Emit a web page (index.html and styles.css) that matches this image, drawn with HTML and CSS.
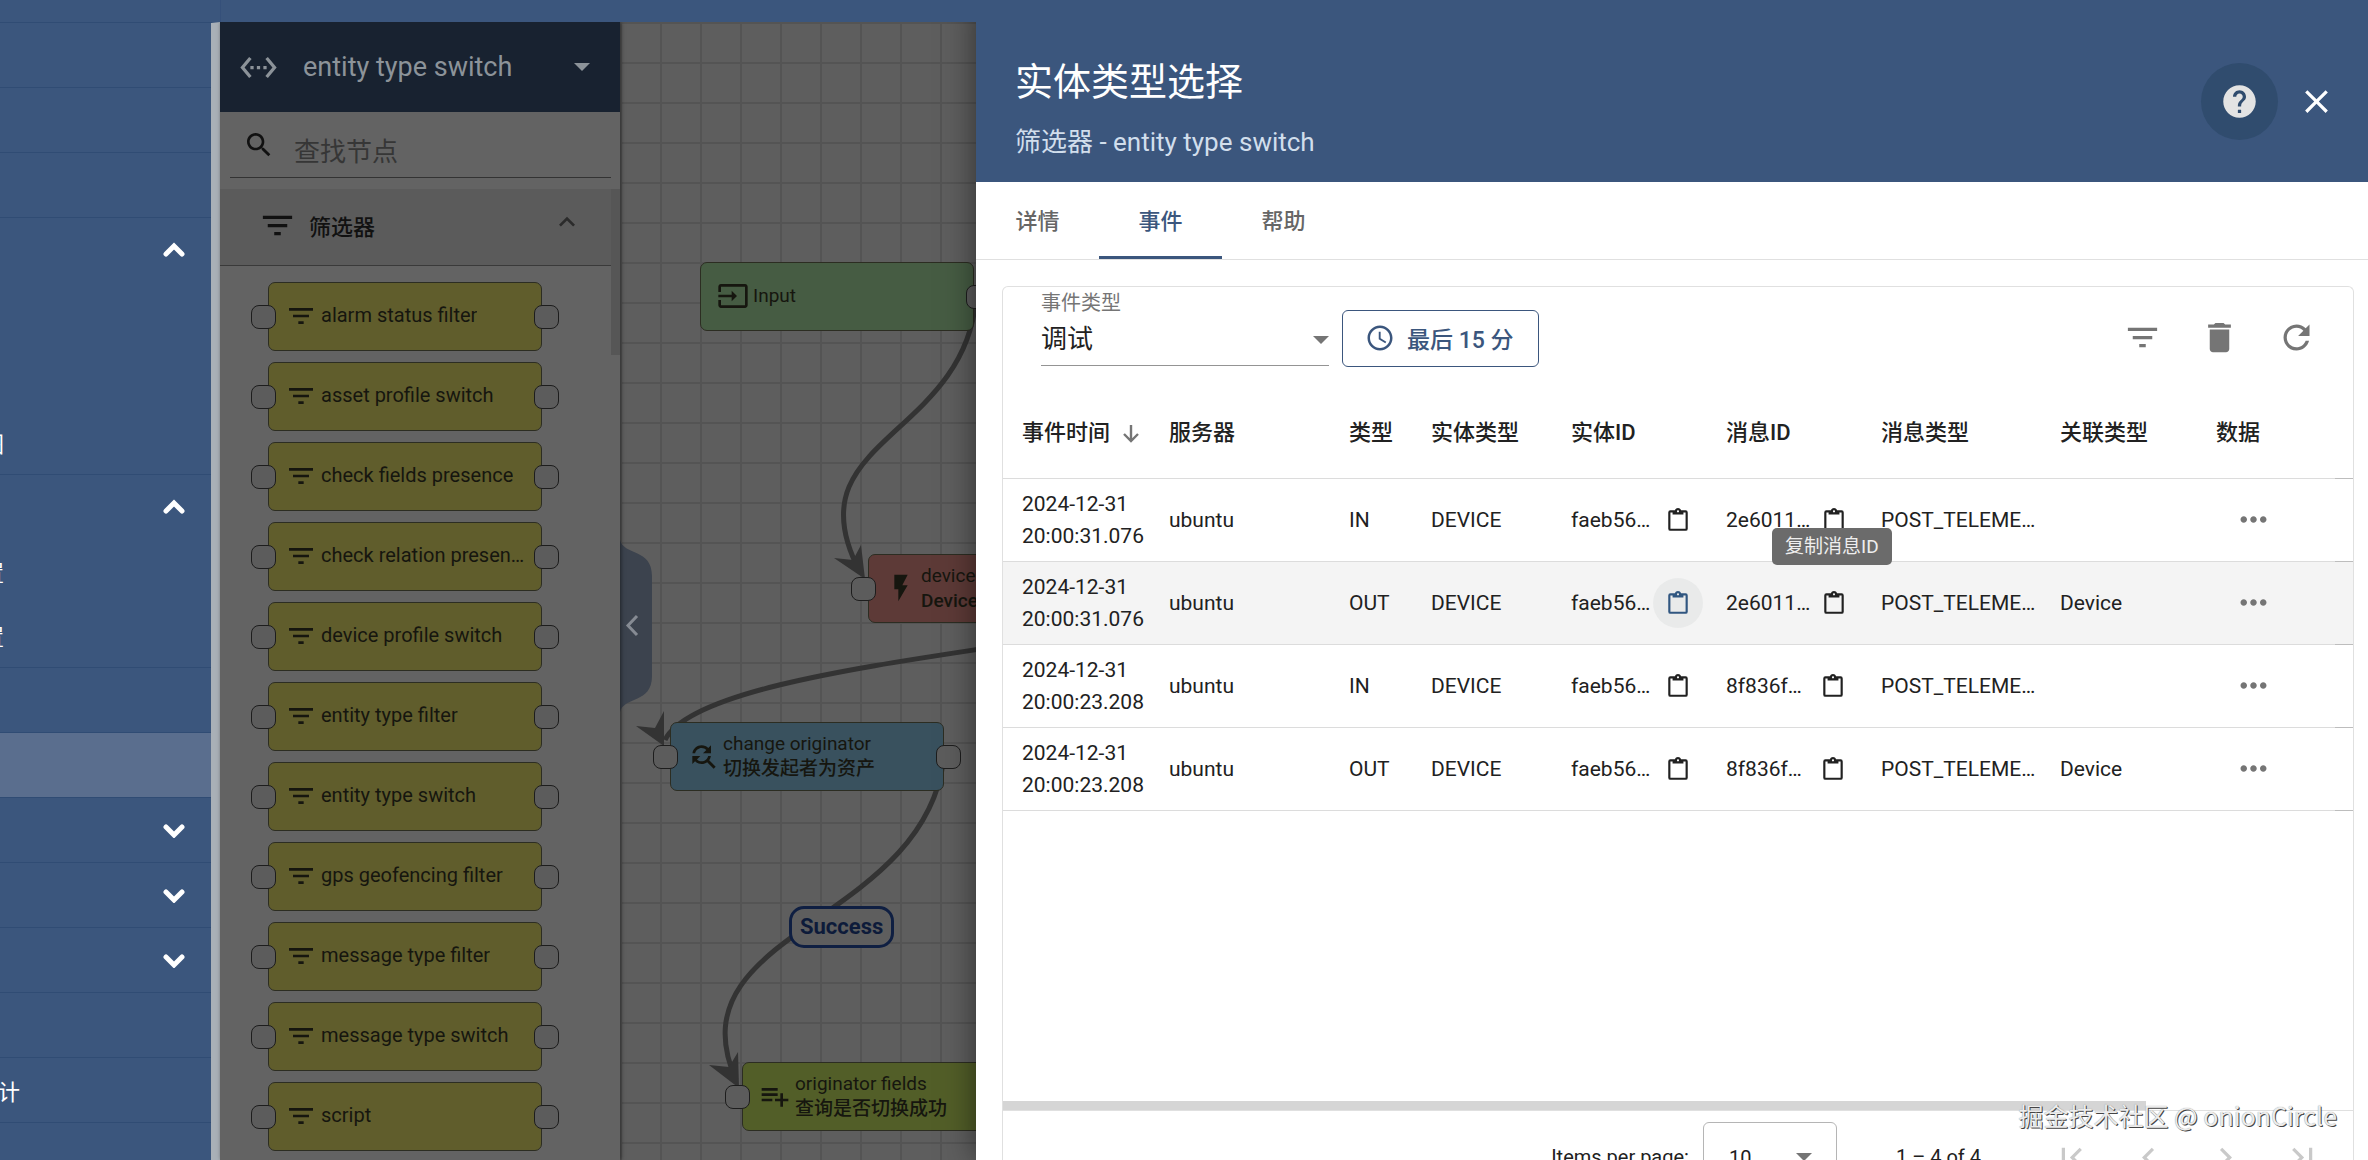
FILE: index.html
```html
<!DOCTYPE html>
<html lang="zh-CN">
<head>
<meta charset="utf-8">
<title>规则链 - entity type switch</title>
<link rel="stylesheet" href="styles.css">
</head>
<body>
<svg class="sprite" aria-hidden="true">
  <symbol id="i-filter" viewBox="0 0 24 24"><path d="M10 18h4v-2h-4v2zM3 6v2h18V6H3zm3 7h12v-2H6v2z"/></symbol>
  <symbol id="i-trash" viewBox="0 0 24 24"><path d="M6 19c0 1.1.9 2 2 2h8c1.1 0 2-.9 2-2V7H6v12zM19 4h-3.5l-1-1h-5l-1 1H5v2h14V4z"/></symbol>
  <symbol id="i-refresh" viewBox="0 0 24 24"><path d="M17.65 6.35C16.2 4.9 14.21 4 12 4c-4.42 0-7.99 3.58-7.99 8s3.57 8 7.99 8c3.73 0 6.84-2.55 7.73-6h-2.08c-.82 2.33-3.04 4-5.65 4-3.31 0-6-2.69-6-6s2.69-6 6-6c1.66 0 3.14.69 4.22 1.78L13 11h7V4l-2.35 2.35z"/></symbol>
  <symbol id="i-help" viewBox="0 0 24 24"><path d="M12 2C6.48 2 2 6.48 2 12s4.48 10 10 10 10-4.48 10-10S17.52 2 12 2zm1 17h-2v-2h2v2zm2.07-7.75l-.9.92C13.45 12.9 13 13.5 13 15h-2v-.5c0-1.1.45-2.1 1.17-2.83l1.24-1.26c.37-.36.59-.86.59-1.41 0-1.1-.9-2-2-2s-2 .9-2 2H8c0-2.21 1.79-4 4-4s4 1.79 4 4c0 .88-.36 1.68-.93 2.25z"/></symbol>
  <symbol id="i-close" viewBox="0 0 24 24"><path d="M19 6.41L17.59 5 12 10.59 6.41 5 5 6.41 10.59 12 5 17.59 6.41 19 12 13.41 17.59 19 19 17.59 13.41 12z"/></symbol>
  <symbol id="i-more" viewBox="0 0 24 24"><path d="M6 10c-1.1 0-2 .9-2 2s.9 2 2 2 2-.9 2-2-.9-2-2-2zm12 0c-1.1 0-2 .9-2 2s.9 2 2 2 2-.9 2-2-.9-2-2-2zm-6 0c-1.1 0-2 .9-2 2s.9 2 2 2 2-.9 2-2-.9-2-2-2z"/></symbol>
  <symbol id="i-clock" viewBox="0 0 24 24"><path d="M11.99 2C6.47 2 2 6.48 2 12s4.47 10 9.99 10C17.52 22 22 17.52 22 12S17.52 2 11.99 2zM12 20c-4.42 0-8-3.58-8-8s3.58-8 8-8 8 3.58 8 8-3.58 8-8 8zm.5-13H11v6l5.25 3.15.75-1.23-4.5-2.67z"/></symbol>
  <symbol id="i-code" viewBox="0 0 24 24"><path d="M7.77 6.76L6.23 5.48.82 12l5.41 6.52 1.54-1.28L3.42 12l4.35-5.24zM7 13h2v-2H7v2zm10-2h-2v2h2v-2zm-6 2h2v-2h-2v2zm6.77-7.52l-1.54 1.28L20.58 12l-4.35 5.24 1.54 1.28L23.18 12l-5.41-6.52z"/></symbol>
  <symbol id="i-search" viewBox="0 0 24 24"><path d="M15.5 14h-.79l-.28-.27C15.41 12.59 16 11.11 16 9.5 16 5.91 13.09 3 9.5 3S3 5.91 3 9.5 5.91 16 9.5 16c1.61 0 3.09-.59 4.23-1.57l.27.28v.79l5 4.99L20.49 19l-4.99-5zm-6 0C7.01 14 5 11.99 5 9.5S7.01 5 9.5 5 14 7.01 14 9.5 11.99 14 9.5 14z"/></symbol>
  <symbol id="i-input" viewBox="0 0 24 24"><path d="M21 3.01H3c-1.1 0-2 .9-2 2V9h2V4.99h18v14.03H3V15H1v4.01c0 1.1.9 1.98 2 1.98h18c1.1 0 2-.88 2-1.98v-14c0-1.11-.9-2-2-2zM11 16l4-4-4-4v3H1v2h10v3z"/></symbol>
  <symbol id="i-bolt" viewBox="0 0 24 24"><path d="M7 2v11h3v9l7-12h-4l4-8z"/></symbol>
  <symbol id="i-replace" viewBox="0 0 24 24"><path d="M11 6c1.38 0 2.63.56 3.54 1.46L12 10h6V4l-2.05 2.05C14.68 4.78 12.93 4 11 4c-3.53 0-6.43 2.61-6.92 6H6.1c.46-2.28 2.48-4 4.9-4zm5.64 9.14c.66-.9 1.12-1.97 1.28-3.14H15.9c-.46 2.28-2.48 4-4.9 4-1.38 0-2.63-.56-3.54-1.46L10 12H4v6l2.05-2.05C7.32 17.22 9.07 18 11 18c1.55 0 2.98-.51 4.14-1.36L20 21.49 21.49 20l-4.85-4.86z"/></symbol>
  <symbol id="i-playlist" viewBox="0 0 24 24"><path d="M14 10H2v2h12v-2zm0-4H2v2h12V6zm4 8v-4h-2v4h-4v2h4v4h2v-4h4v-2h-4zM2 16h8v-2H2v2z"/></symbol>
  <symbol id="i-clipboard" viewBox="0 0 24 24"><path d="M19,3H14.82C14.4,1.84 13.3,1 12,1C10.7,1 9.6,1.84 9.18,3H5A2,2 0 0,0 3,5V20A2,2 0 0,0 5,22H19A2,2 0 0,0 21,20V5A2,2 0 0,0 19,3M12,3A1,1 0 0,1 13,4A1,1 0 0,1 12,5A1,1 0 0,1 11,4A1,1 0 0,1 12,3M7,7H17V5H19V20H5V5H7V7Z"/></symbol>
  <symbol id="i-up" viewBox="0 0 24 24"><path d="M7.41 15.41L12 10.83l4.59 4.58L18 14l-6-6-6 6z"/></symbol>
  <symbol id="i-menu-up" viewBox="0 0 24 16"><path d="M4 12l8-8 8 8" fill="none" stroke="currentColor" stroke-width="5" stroke-linecap="round"/></symbol>
  <symbol id="i-menu-down" viewBox="0 0 24 16"><path d="M4 5l8 8 8-8" fill="none" stroke="currentColor" stroke-width="5" stroke-linecap="round"/></symbol>
  <symbol id="i-caret" viewBox="0 0 16 8"><path d="M0 0h16L8 8z"/></symbol>
  <symbol id="i-sort" viewBox="0 0 16 18"><path d="M8 0v16M1 9l7 7 7-7" fill="none" stroke="currentColor" stroke-width="2.4"/></symbol>
  <symbol id="i-first" viewBox="0 0 24 24"><path d="M18.41 16.59L13.82 12l4.59-4.59L17 6l-6 6 6 6zM6 6h2v12H6z"/></symbol>
  <symbol id="i-prev" viewBox="0 0 24 24"><path d="M15.41 7.41L14 6l-6 6 6 6 1.41-1.41L10.83 12z"/></symbol>
  <symbol id="i-next" viewBox="0 0 24 24"><path d="M10 6L8.59 7.41 13.17 12l-4.58 4.59L10 18l6-6z"/></symbol>
  <symbol id="i-last" viewBox="0 0 24 24"><path d="M5.59 7.41L10.18 12l-4.59 4.59L7 18l6-6-6-6zM16 6h2v12h-2z"/></symbol>
</svg>

<div class="app">
  <header class="topbar"><div class="topbar-brand"></div></header>
  <div class="workspace">
    <nav class="sidebar">
      <ul class="menu">
        <li class="menu-group"><a class="menu-item" href="#" aria-label="首页"></a></li>
        <li class="menu-group"><a class="menu-item" href="#" aria-label="告警"></a></li>
        <li class="menu-group"><a class="menu-item" href="#" aria-label="仪表板"></a></li>
        <li class="menu-group">
          <a class="menu-item" href="#" aria-label="实体"><svg class="menu-chevron"><use href="#i-menu-up"/></svg></a>
          <a class="menu-sub" href="#" aria-label="设备"></a>
          <a class="menu-sub" href="#" aria-label="资产"></a>
          <a class="menu-sub" href="#"><span class="menu-label">图</span></a>
        </li>
        <li class="menu-group">
          <a class="menu-item" href="#" aria-label="配置"><svg class="menu-chevron"><use href="#i-menu-up"/></svg></a>
          <a class="menu-sub" href="#"><span class="menu-label">置</span></a>
          <a class="menu-sub" href="#"><span class="menu-label">置</span></a>
        </li>
        <li class="menu-group"><a class="menu-item" href="#" aria-label="客户"></a></li>
        <li class="menu-group"><a class="menu-item menu-item-active" href="#" aria-label="规则链库"></a></li>
        <li class="menu-group"><a class="menu-item" href="#" aria-label="边缘管理"><svg class="menu-chevron"><use href="#i-menu-down"/></svg></a></li>
        <li class="menu-group"><a class="menu-item" href="#" aria-label="高级功能"><svg class="menu-chevron"><use href="#i-menu-down"/></svg></a></li>
        <li class="menu-group"><a class="menu-item" href="#" aria-label="资源"><svg class="menu-chevron"><use href="#i-menu-down"/></svg></a></li>
        <li class="menu-group"><a class="menu-item" href="#" aria-label="通知中心"></a></li>
        <li class="menu-group"><a class="menu-item" href="#"><span class="menu-label menu-label-wide">计</span></a></li>
        <li class="menu-group"><a class="menu-item" href="#" aria-label="设置"></a></li>
      </ul>
    </nav>

    <aside class="library">
      <button class="library-head" type="button">
        <svg class="icon-lg"><use href="#i-code"/></svg>
        <span class="library-title">entity type switch</span>
        <svg class="caret"><use href="#i-caret"/></svg>
      </button>
      <label class="search">
        <svg class="icon-md"><use href="#i-search"/></svg>
        <input class="search-input" type="text" placeholder="查找节点" aria-label="查找节点">
      </label>
      <div class="library-body">
        <button class="category" type="button">
          <svg class="icon-lg"><use href="#i-filter"/></svg>
          <span class="category-title">筛选器</span>
          <svg class="icon-md category-chevron"><use href="#i-up"/></svg>
        </button>
        <ul class="node-list">
          <li class="node node-filter"><svg class="icon-md"><use href="#i-filter"/></svg><span class="node-name">alarm status filter</span></li>
          <li class="node node-filter"><svg class="icon-md"><use href="#i-filter"/></svg><span class="node-name">asset profile switch</span></li>
          <li class="node node-filter"><svg class="icon-md"><use href="#i-filter"/></svg><span class="node-name">check fields presence</span></li>
          <li class="node node-filter"><svg class="icon-md"><use href="#i-filter"/></svg><span class="node-name">check relation presence</span></li>
          <li class="node node-filter"><svg class="icon-md"><use href="#i-filter"/></svg><span class="node-name">device profile switch</span></li>
          <li class="node node-filter"><svg class="icon-md"><use href="#i-filter"/></svg><span class="node-name">entity type filter</span></li>
          <li class="node node-filter"><svg class="icon-md"><use href="#i-filter"/></svg><span class="node-name">entity type switch</span></li>
          <li class="node node-filter"><svg class="icon-md"><use href="#i-filter"/></svg><span class="node-name">gps geofencing filter</span></li>
          <li class="node node-filter"><svg class="icon-md"><use href="#i-filter"/></svg><span class="node-name">message type filter</span></li>
          <li class="node node-filter"><svg class="icon-md"><use href="#i-filter"/></svg><span class="node-name">message type switch</span></li>
          <li class="node node-filter"><svg class="icon-md"><use href="#i-filter"/></svg><span class="node-name">script</span></li>
        </ul>
        <div class="library-thumb"></div>
      </div>
    </aside>

    <main class="canvas">
      <svg class="edges" viewBox="620 22 400 1138" width="400" height="1138" aria-hidden="true">
        <path class="edge-tab" d="M620 540C624 556 652 548 652 576V676C652 704 624 696 620 712Z"/>
        <path class="edge-chevron" d="M637 616l-9 9.500 9 9.500"/>
        <g class="edge">
          <path d="M976 300C962 440 790 440 860 572"/>
          <path d="M1000 646C870 666 690 690 665 740"/>
          <path d="M944 757C925 925 670 930 736 1080"/>
        </g>
        <g class="arrow">
          <path d="M865 579L834 558 853 560 861 545Z"/>
          <path d="M664 746L636 726 655 728 664 711Z"/>
          <path d="M739 1088L709 1065 729 1067 738 1052Z"/>
        </g>
      </svg>
      <div class="node node-input no-in canvas-node at-input"><svg class="icon-md"><use href="#i-input"/></svg><span class="node-name">Input</span></div>
      <div class="node node-action canvas-node at-device"><svg class="icon-md"><use href="#i-bolt"/></svg><span class="node-text"><span>device</span><b>Device</b></span></div>
      <div class="node node-transform canvas-node at-change"><svg class="icon-md"><use href="#i-replace"/></svg><span class="node-text"><span>change originator</span><b>切换发起者为资产</b></span></div>
      <div class="node node-enrich canvas-node at-fields"><svg class="icon-md"><use href="#i-playlist"/></svg><span class="node-text"><span>originator fields</span><b>查询是否切换成功</b></span></div>
      <div class="edge-label">Success</div>
    </main>
  </div>

  <section class="drawer">
    <header class="drawer-head">
      <div class="drawer-titles">
        <h1 class="drawer-title">实体类型选择</h1>
        <p class="drawer-subtitle">筛选器 - entity type switch</p>
      </div>
      <div class="drawer-actions">
        <button class="round-btn round-btn-help" type="button" aria-label="帮助"><svg class="icon-lg"><use href="#i-help"/></svg></button>
        <button class="round-btn" type="button" aria-label="关闭"><svg class="icon-lg"><use href="#i-close"/></svg></button>
      </div>
    </header>
    <div class="tabs" role="tablist">
      <button class="tab" role="tab" type="button">详情</button>
      <button class="tab tab-active" role="tab" type="button" aria-selected="true">事件</button>
      <button class="tab" role="tab" type="button">帮助</button>
    </div>
    <div class="card">
      <div class="toolbar">
        <div class="field">
          <label class="field-label" for="event-type">事件类型</label>
          <div class="select-wrap">
            <select class="field-select" id="event-type"><option>调试</option></select>
            <svg class="caret"><use href="#i-caret"/></svg>
          </div>
        </div>
        <button class="time-btn" type="button"><svg class="icon-sm"><use href="#i-clock"/></svg>最后 15 分</button>
        <div class="toolbar-actions">
          <button class="tool-btn" type="button" aria-label="筛选"><svg class="icon-lg"><use href="#i-filter"/></svg></button>
          <button class="tool-btn" type="button" aria-label="清除"><svg class="icon-lg"><use href="#i-trash"/></svg></button>
          <button class="tool-btn" type="button" aria-label="刷新"><svg class="icon-lg"><use href="#i-refresh"/></svg></button>
        </div>
      </div>
      <div class="table-area">
        <table class="events">
          <colgroup><col class="c-time"><col class="c-server"><col class="c-type"><col class="c-etype"><col class="c-id"><col class="c-id"><col class="c-mtype"><col class="c-rel"><col><col class="c-edge"></colgroup>
          <thead>
            <tr><th>事件时间<svg class="sort"><use href="#i-sort"/></svg></th><th>服务器</th><th>类型</th><th>实体类型</th><th>实体ID</th><th>消息ID</th><th>消息类型</th><th>关联类型</th><th>数据</th><th></th></tr>
          </thead>
          <tbody>
            <tr>
              <td>2024-12-31<br>20:00:31.076</td><td>ubuntu</td><td>IN</td><td>DEVICE</td>
              <td><div class="id-cell"><span>faeb56…</span><button class="copy-btn" type="button" aria-label="复制实体ID"><svg class="icon-xs"><use href="#i-clipboard"/></svg></button></div></td>
              <td><div class="id-cell"><span>2e6011…</span><button class="copy-btn" type="button" aria-label="复制消息ID"><svg class="icon-xs"><use href="#i-clipboard"/></svg></button><span class="tooltip" role="tooltip">复制消息ID</span></div></td>
              <td>POST_TELEME…</td><td></td>
              <td><button class="more-btn" type="button" aria-label="数据"><svg class="icon-lg"><use href="#i-more"/></svg></button></td><td></td>
            </tr>
            <tr class="row-hover">
              <td>2024-12-31<br>20:00:31.076</td><td>ubuntu</td><td>OUT</td><td>DEVICE</td>
              <td><div class="id-cell"><span>faeb56…</span><button class="copy-btn copy-btn-hover" type="button" aria-label="复制实体ID"><svg class="icon-xs"><use href="#i-clipboard"/></svg></button></div></td>
              <td><div class="id-cell"><span>2e6011…</span><button class="copy-btn" type="button" aria-label="复制消息ID"><svg class="icon-xs"><use href="#i-clipboard"/></svg></button></div></td>
              <td>POST_TELEME…</td><td>Device</td>
              <td><button class="more-btn" type="button" aria-label="数据"><svg class="icon-lg"><use href="#i-more"/></svg></button></td><td></td>
            </tr>
            <tr>
              <td>2024-12-31<br>20:00:23.208</td><td>ubuntu</td><td>IN</td><td>DEVICE</td>
              <td><div class="id-cell"><span>faeb56…</span><button class="copy-btn" type="button" aria-label="复制实体ID"><svg class="icon-xs"><use href="#i-clipboard"/></svg></button></div></td>
              <td><div class="id-cell"><span>8f836f…</span><button class="copy-btn" type="button" aria-label="复制消息ID"><svg class="icon-xs"><use href="#i-clipboard"/></svg></button></div></td>
              <td>POST_TELEME…</td><td></td>
              <td><button class="more-btn" type="button" aria-label="数据"><svg class="icon-lg"><use href="#i-more"/></svg></button></td><td></td>
            </tr>
            <tr>
              <td>2024-12-31<br>20:00:23.208</td><td>ubuntu</td><td>OUT</td><td>DEVICE</td>
              <td><div class="id-cell"><span>faeb56…</span><button class="copy-btn" type="button" aria-label="复制实体ID"><svg class="icon-xs"><use href="#i-clipboard"/></svg></button></div></td>
              <td><div class="id-cell"><span>8f836f…</span><button class="copy-btn" type="button" aria-label="复制消息ID"><svg class="icon-xs"><use href="#i-clipboard"/></svg></button></div></td>
              <td>POST_TELEME…</td><td>Device</td>
              <td><button class="more-btn" type="button" aria-label="数据"><svg class="icon-lg"><use href="#i-more"/></svg></button></td><td></td>
            </tr>
          </tbody>
        </table>
        <div class="scroll-track"><div class="scroll-thumb"></div></div>
      </div>
      <footer class="paginator">
        <label for="page-size">Items per page:</label>
        <div class="page-size-wrap">
          <select class="page-size" id="page-size"><option>10</option></select>
          <svg class="caret"><use href="#i-caret"/></svg>
        </div>
        <span class="range">1 – 4 of 4</span>
        <div class="pager">
          <button class="tool-btn" type="button" disabled aria-label="First page"><svg class="icon-lg"><use href="#i-first"/></svg></button>
          <button class="tool-btn" type="button" disabled aria-label="Previous page"><svg class="icon-lg"><use href="#i-prev"/></svg></button>
          <button class="tool-btn" type="button" disabled aria-label="Next page"><svg class="icon-lg"><use href="#i-next"/></svg></button>
          <button class="tool-btn" type="button" disabled aria-label="Last page"><svg class="icon-lg"><use href="#i-last"/></svg></button>
        </div>
      </footer>
    </div>
  </section>
  <div class="watermark">掘金技术社区 @ onionCircle</div>
</div>
</body>
</html>
```
FILE: styles.css
```css
* { box-sizing: border-box; }

body {
  margin: 0;
  font-family: Roboto, "Noto Sans CJK SC", sans-serif;
  font-size: 21px;
  color: #212121;
}

button, input, select {
  font: inherit;
  color: inherit;
  margin: 0;
  padding: 0;
  border: 0;
  background: none;
  outline: 0;
}

select { appearance: none; }
svg { display: block; fill: currentColor; flex: none; }
ul { list-style: none; margin: 0; padding: 0; }

.sprite { position: absolute; width: 0; height: 0; }
.icon-lg { width: 39px; height: 39px; }
.icon-md { width: 32px; height: 32px; }
.icon-sm { width: 30px; height: 30px; }
.icon-xs { width: 26px; height: 26px; }
.caret { width: 16px; height: 8px; }

.app {
  position: relative;
  display: flex;
  flex-direction: column;
  height: 100vh;
  overflow: hidden;
  background: #3b567d;
}

.topbar {
  position: relative;
  z-index: 3;
  height: 22px;
  flex: none;
  background: #3b567d;
}
.topbar-brand { width: 221px; height: 100%; border-right: 1px solid #35507a; }
.workspace { flex: 1; display: flex; min-height: 0; }

/* Main menu */
.sidebar {
  width: 220px;
  flex: none;
  border-right: 9px solid #a9b0b7;
  border-top: 1px solid #304c74;
  overflow: hidden;
}
.menu-group { border-bottom: 1px solid #304c74; }
.menu-item, .menu-sub {
  display: flex;
  align-items: center;
  height: 64px;
  color: #fff;
  text-decoration: none;
}
.menu-item-active { background: #5a6e8e; }
.menu-chevron { width: 24px; height: 16px; margin-left: auto; margin-right: 25px; }
.menu-label {
  display: flex;
  justify-content: flex-end;
  width: 4px;
  overflow: hidden;
  font-size: 22px;
}
.menu-label-wide { width: 20px; }

/* Node library */
.library {
  position: relative;
  z-index: 1;
  width: 400px;
  flex: none;
  display: flex;
  flex-direction: column;
  background: #636363;
  box-shadow: 1px 0 4px rgba(0, 0, 0, .5);
}
.library-head {
  display: flex;
  align-items: center;
  height: 90px;
  padding: 0 30px 0 19px;
  gap: 25px;
  background: #182230;
  color: #8c9399;
  font-size: 27px;
  text-align: left;
}
.library-title { flex: 1; }
.search {
  display: flex;
  align-items: center;
  height: 66px;
  flex: none;
  margin: 0 9px 11px 10px;
  padding-left: 13px;
  gap: 19px;
  border-bottom: 1px solid #333;
  color: #111;
  font-size: 26px;
}
.search-input { flex: 1; min-width: 0; height: 50px; padding-top: 14px; }
.search-input::placeholder { color: #363636; opacity: 1; }
.library-body { position: relative; flex: 1; min-height: 0; overflow: hidden; }
.library-thumb {
  position: absolute;
  top: 0;
  right: 0;
  width: 9px;
  height: 166px;
  background: #565656;
}
.category {
  display: flex;
  align-items: center;
  width: 391px;
  height: 77px;
  padding: 0 28px 4px 38px;
  gap: 12px;
  background: #5b5b5b;
  border-bottom: 1px solid #3a3a3a;
  color: #111;
  font-size: 22px;
  font-weight: 500;
}
.category-chevron { margin-left: auto; margin-bottom: 6px; color: #2b2b2b; }
.node-list {
  display: flex;
  flex-direction: column;
  gap: 11px;
  padding: 16px 78px 0 48px;
}

.node {
  position: relative;
  display: flex;
  align-items: center;
  gap: 4px;
  height: 69px;
  padding: 0 16px 2px;
  border: 1px solid #2c2d22;
  border-radius: 7px;
  color: #16160f;
  font-size: 19px;
  line-height: 25px;
  white-space: nowrap;
}
.node::before, .node::after {
  content: "";
  position: absolute;
  top: 22px;
  width: 23px;
  height: 22px;
  border: 1px solid #1d1d1d;
  border-radius: 8px;
  background: #5c5c5c;
}
.node::before { left: -18px; }
.node::after { right: -18px; }
.node.no-in::before { display: none; }
.node-name { overflow: hidden; text-overflow: ellipsis; }
.node-text { display: flex; flex-direction: column; }
.node-text b { font-weight: 500; }
.node-filter { background: #605d2c; padding-right: 15px; font-size: 20px; }
.node-input { background: #465c43; }
.node-action { background: #5d3a37; }
.node-transform { background: #39515e; }
.node-enrich { background: #525e28; }

/* Rule chain canvas */
.canvas {
  position: relative;
  flex: 1;
  overflow: hidden;
  background-color: #5e5e5e;
  background-image:
    linear-gradient(#545454 2px, transparent 2px),
    linear-gradient(90deg, #545454 2px, transparent 2px);
  background-size: 40px 40px;
}
.edges { position: absolute; left: 0; top: 0; }
.edge path { fill: none; stroke: #333; stroke-width: 5; }
.arrow { fill: #333; }
.edge-tab { fill: #3c434e; }
.edge-chevron { fill: none; stroke: #868b93; stroke-width: 3; }
.canvas-node { position: absolute; width: 274px; }
.at-input { left: 80px; top: 240px; }
.at-device { left: 248px; top: 532px; }
.at-change { left: 50px; top: 700px; }
.at-fields { left: 122px; top: 1040px; }
.edge-label {
  position: absolute;
  left: 169px;
  top: 884px;
  padding: 5px 8px;
  border: 3px solid #0f1f42;
  border-radius: 15px;
  background: #5e5e5e;
  color: #0d1b3a;
  font-size: 22px;
  font-weight: 700;
  line-height: 26px;
}

/* Details drawer */
.drawer {
  position: absolute;
  z-index: 2;
  inset: 0 0 0 976px;
  display: flex;
  flex-direction: column;
  background: #fff;
  box-shadow: 0 0 30px rgba(0, 0, 0, .5);
}
.drawer-head {
  position: relative;
  z-index: 1;
  display: flex;
  justify-content: space-between;
  height: 182px;
  flex: none;
  padding-left: 39px;
  padding-right: 13px;
  background: #3b567d;
  color: #fff;
}
.drawer-titles { padding-top: 57px; }
.drawer-title { margin: 0 0 18px; font-size: 38px; line-height: 50px; font-weight: 400; }
.drawer-subtitle { margin: 0; font-size: 26px; line-height: 34px; color: #d1deec; }
.drawer-actions { display: flex; padding-top: 63px; }
.round-btn {
  display: flex;
  align-items: center;
  justify-content: center;
  width: 77px;
  height: 77px;
  border-radius: 50%;
}
.round-btn-help { background: #304c6e; color: #e3e3e3; }

.tabs { display: flex; height: 78px; flex: none; border-bottom: 1px solid #e0e0e0; }
.tab {
  width: 123px;
  height: 77px;
  border-bottom: 3px solid transparent;
  color: #666;
  font-size: 22px;
  font-weight: 500;
}
.tab-active { color: #3b567d; border-color: #3b567d; }

.card {
  flex: 1;
  min-height: 0;
  display: flex;
  flex-direction: column;
  margin: 26px 14px 0 26px;
  border: 1px solid #e0e0e0;
  border-bottom: 0;
  border-radius: 6px 6px 0 0;
}
.toolbar { display: flex; flex: none; height: 101px; padding: 6px 18px 0 38px; }
.field { width: 288px; margin-right: 13px; }
.field-label { display: block; font-size: 20px; line-height: 20px; color: #757575; }
.select-wrap { display: flex; align-items: center; }
.field-select {
  width: 100%;
  height: 53px;
  border-bottom: 1px solid #949494;
  font-size: 26px;
}
.select-wrap .caret { margin-left: -16px; color: #757575; pointer-events: none; }
.time-btn {
  display: flex;
  align-items: center;
  gap: 12px;
  height: 57px;
  margin-top: 17px;
  padding: 0 24px 2px 22px;
  border: 1px solid #3b567d;
  border-radius: 6px;
  color: #3b567d;
  font-size: 23px;
  font-weight: 500;
}
.toolbar-actions { display: flex; margin: 16px 0 0 auto; color: #757575; }
.tool-btn { display: flex; align-items: center; justify-content: center; width: 77px; height: 57px; }

.table-area { display: flex; flex-direction: column; flex: 1; min-height: 0; border-bottom: 1px solid #e0e0e0; }
.events { width: 100%; table-layout: fixed; border-collapse: collapse; line-height: 32px; }
.c-time { width: 166px; }
.c-server { width: 180px; }
.c-type { width: 82px; }
.c-etype { width: 140px; }
.c-id { width: 155px; }
.c-mtype { width: 179px; }
.c-rel { width: 156px; }
.c-edge { width: 18px; }
.events th {
  height: 90px;
  padding: 0;
  border-bottom: 1px solid #dcdcdc;
  font-size: 22px;
  font-weight: 500;
  text-align: left;
  white-space: nowrap;
}
.events td { height: 83px; padding: 0; border-bottom: 1px solid #dcdcdc; }
.events th:first-child, .events td:first-child { padding-left: 19px; }
.events th:last-child, .events td:last-child { border-color: #bdbdbd; }
.sort { display: inline-block; width: 16px; height: 18px; margin-left: 13px; vertical-align: -3px; color: #757575; }
.row-hover { background: #f4f4f4; }
.id-cell { position: relative; display: flex; align-items: center; justify-content: space-between; padding-right: 23px; }
.copy-btn {
  display: flex;
  align-items: center;
  justify-content: center;
  width: 50px;
  height: 50px;
  border-radius: 50%;
}
.copy-btn-hover { background: #e9eaea; color: #305680; }
.tooltip {
  position: absolute;
  top: 33px;
  left: 46px;
  padding: 0 13px;
  border-radius: 5px;
  background: #6b6b6b;
  color: #eee;
  font-size: 19px;
  line-height: 37px;
  white-space: nowrap;
}
.more-btn { display: block; margin-left: 18px; color: #757575; }
.scroll-track { margin-top: auto; padding-right: 207px; }
.scroll-thumb { height: 9px; background: #d5d5d5; }

.paginator {
  display: flex;
  align-items: flex-start;
  justify-content: flex-end;
  height: 49px;
  flex: none;
  overflow: hidden;
  padding: 11px 12px 0 0;
  font-size: 20px;
  line-height: 70px;
}
.page-size-wrap {
  display: flex;
  align-items: center;
  width: 134px;
  height: 70px;
  margin: 0 59px 0 14px;
  border: 1px solid #b5b5b5;
  border-radius: 6px;
}
.page-size { width: 100%; height: 68px; padding-left: 25px; }
.page-size-wrap .caret { margin-left: -40px; margin-right: 24px; color: #757575; pointer-events: none; }
.range { margin-right: 52px; }
.pager { display: flex; color: #c9c9c9; }
.pager .tool-btn { height: 70px; }

.watermark {
  position: absolute;
  z-index: 3;
  right: 31px;
  bottom: 26px;
  color: #ececec;
  font-family: "Noto Sans CJK SC", sans-serif;
  font-size: 25px;
  line-height: 38px;
  text-shadow: 1px 1px 0 #444, 0 0 1px #888;
}
```
